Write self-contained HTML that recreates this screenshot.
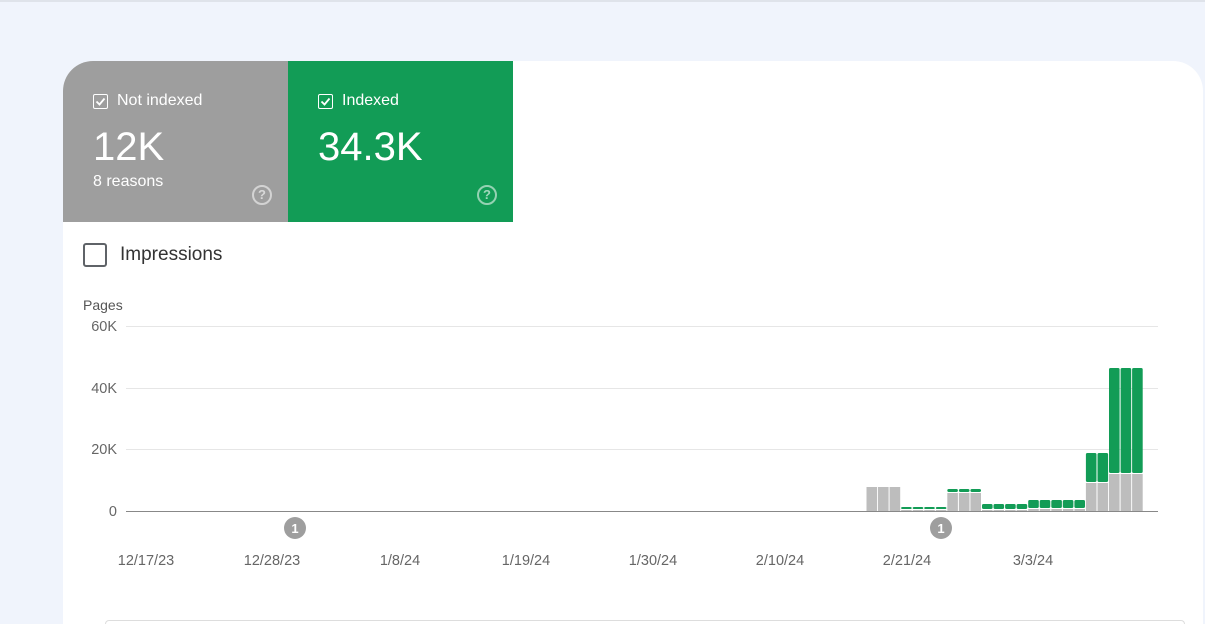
<!DOCTYPE html>
<html><head><style>
*{margin:0;padding:0;box-sizing:border-box}
html,body{width:1205px;height:624px;overflow:hidden}
body{background:#f0f4fc;font-family:"Liberation Sans",Arial,sans-serif;position:relative}
.top{position:absolute;left:0;top:0;width:1205px;height:2px;background:#dfe3ea}
.card{position:absolute;left:63px;top:61px;width:1140px;height:563px;background:#fff;border-radius:30px 30px 0 0;overflow:hidden}
.tile{position:absolute;top:0;height:161px;width:225px;color:#fff}
.t1{left:0;background:#9e9e9e}
.t2{left:225px;background:#129c56}
.lab{position:absolute;left:30px;top:31px;font-size:16px;display:flex;align-items:center}
.cb{width:15px;height:15px;border:1.5px solid #fff;border-radius:2px;margin-right:9px;display:flex;align-items:center;justify-content:center}
.num{position:absolute;left:30px;top:64px;font-size:40px}
.sub{position:absolute;left:30px;top:112px;font-size:16px}
.q{position:absolute;left:189px;top:124px;width:20px;height:20px;border:2px solid rgba(255,255,255,.55);border-radius:50%;color:rgba(255,255,255,.6);font-size:13px;font-weight:bold;text-align:center;line-height:16px}
.imp{position:absolute;left:20px;top:182px;display:flex;align-items:center;font-size:19px;color:#333}
.imp .b{width:24px;height:24px;border:2px solid #5f6368;border-radius:3px;margin-right:13px}
svg{position:absolute;left:0;top:0}
.bot{position:absolute;left:42px;top:559px;width:1080px;height:4px;border:1px solid #ddd;border-bottom:none;border-radius:20px 20px 0 0}
</style></head><body>
<div class="top"></div>
<div class="card">
<div class="tile t1"><div class="lab"><div class="cb"><svg width="11" height="11" viewBox="0 0 11 11" style="position:static"><path d="M1.5 5.5l3 3 5-6" stroke="#fff" stroke-width="1.8" fill="none"/></svg></div>Not indexed</div><div class="num">12K</div><div class="sub">8 reasons</div><div class="q">?</div></div>
<div class="tile t2"><div class="lab"><div class="cb"><svg width="11" height="11" viewBox="0 0 11 11" style="position:static"><path d="M1.5 5.5l3 3 5-6" stroke="#fff" stroke-width="1.8" fill="none"/></svg></div>Indexed</div><div class="num">34.3K</div><div class="q">?</div></div>
<div class="imp"><div class="b"></div>Impressions</div>
<div class="bot"></div>
</div>
<svg width="1205" height="624" font-family="Liberation Sans, Arial, sans-serif">
<text x="83" y="310" font-size="14" fill="#555">Pages</text>
<g font-size="14.5" fill="#666" text-anchor="end">
<text x="117" y="331">60K</text><text x="117" y="393">40K</text><text x="117" y="454">20K</text><text x="117" y="516">0</text></g>
<g stroke="#e6e6e6"><line x1="126" y1="326.5" x2="1158" y2="326.5"/><line x1="126" y1="388.5" x2="1158" y2="388.5"/><line x1="126" y1="449.5" x2="1158" y2="449.5"/></g>
<g id="bars"></g>
<line x1="126" y1="511.5" x2="1158" y2="511.5" stroke="#888"/>
<circle cx="295" cy="528" r="11" fill="#9e9e9e"/><text x="295" y="533" font-size="13" fill="#fff" text-anchor="middle" font-weight="bold">1</text>
<circle cx="941" cy="528" r="11" fill="#9e9e9e"/><text x="941" y="533" font-size="13" fill="#fff" text-anchor="middle" font-weight="bold">1</text>
<g font-size="14.5" fill="#666" text-anchor="middle">
<text x="146" y="565">12/17/23</text><text x="272" y="565">12/28/23</text><text x="400" y="565">1/8/24</text><text x="526" y="565">1/19/24</text><text x="653" y="565">1/30/24</text><text x="780" y="565">2/10/24</text><text x="907" y="565">2/21/24</text><text x="1033" y="565">3/3/24</text></g>
</svg>
<script>
var g=document.getElementById('bars'),s='';
var d=[[3,487,487],[4,509,507],[3,492,489],[4,509,504],[5,508,500],[2,482,453],[3,473,368]];
var x=866,w=11.55;
d.forEach(function(a){for(var i=0;i<a[0];i++){var X=(x+0.5).toFixed(1),W=(w-1).toFixed(1);
if(a[2]<a[1])s+='<rect x="'+X+'" y="'+a[2]+'" width="'+W+'" height="'+(a[1]-a[2])+'" rx="1.5" fill="#129c56"/>';
s+='<rect x="'+X+'" y="'+(a[1]+(a[2]<a[1]?1:0))+'" width="'+W+'" height="'+(511-a[1])+'" fill="#bdbdbd"/>';x+=w;}});
g.innerHTML=s;
</script>
</body></html>
